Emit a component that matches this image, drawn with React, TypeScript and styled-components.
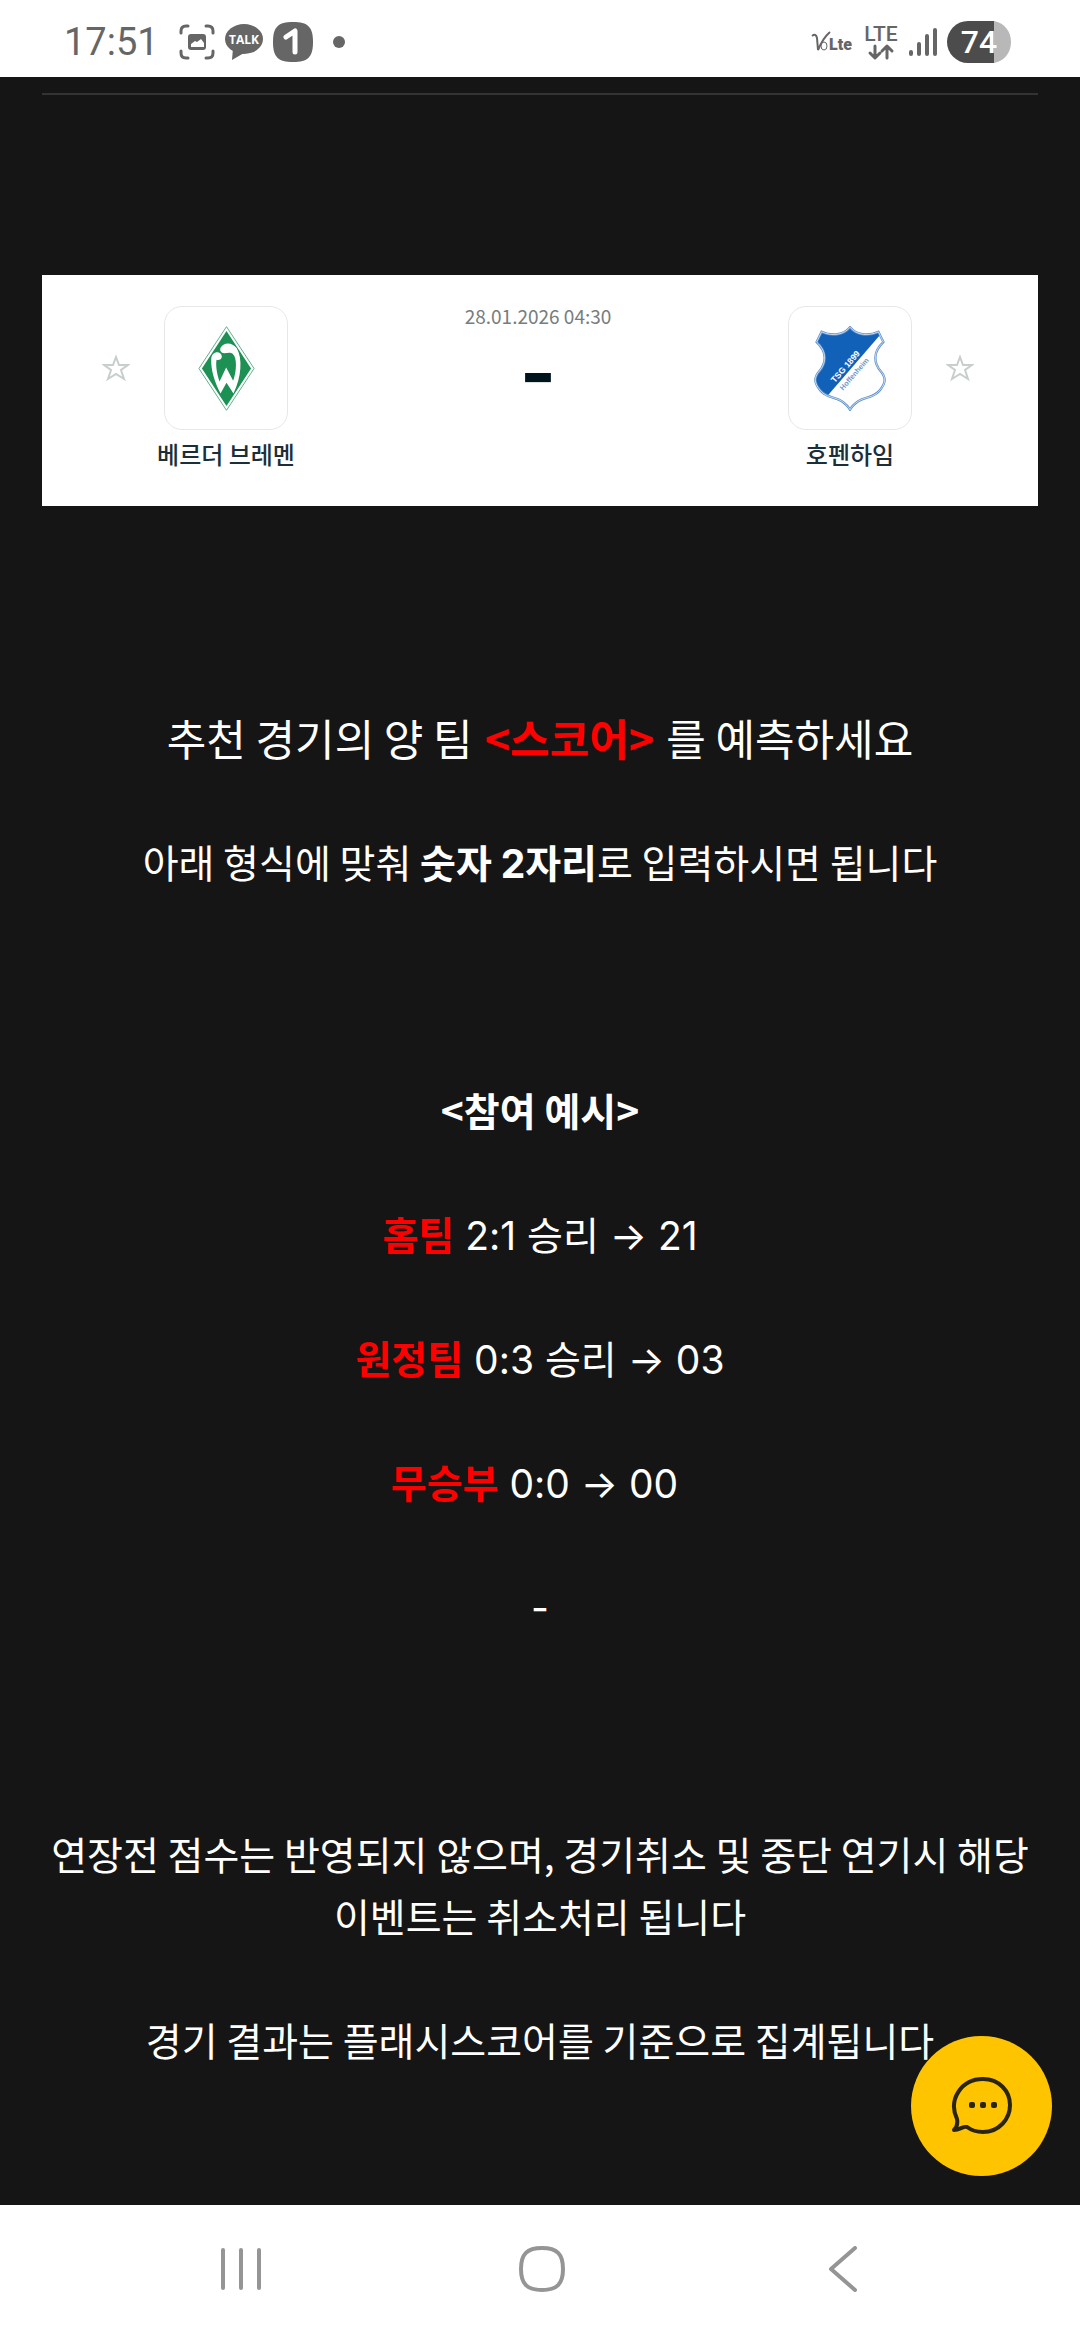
import React from 'react'
import styled, { createGlobalStyle } from 'styled-components'

const App = () => {
  return (
    <Screen>
      <GlobalStyle />
      <StatusBar>
        <StatusGroup>
          <Clock>17:51</Clock>
          <CaptureIcon />
          <TalkIcon />
          <OneIcon />
          <Dot />
        </StatusGroup>
        <StatusGroup>
          <VolteIcon />
          <LteIcon />
          <SignalIcon />
          <BatteryIcon />
        </StatusGroup>
      </StatusBar>

      <Content>
        <Divider />
        <MatchCard>
          <StarButton aria-label="베르더 브레멘 즐겨찾기">
            <StarIcon />
          </StarButton>
          <Team>
            <Badge>
              <BremenCrest />
            </Badge>
            <TeamName>베르더 브레멘</TeamName>
          </Team>
          <MatchInfo>
            <time dateTime="2026-01-28T04:30">28.01.2026 04:30</time>
            <Score>-</Score>
          </MatchInfo>
          <Team>
            <Badge>
              <HoffenheimCrest />
            </Badge>
            <TeamName>호펜하임</TeamName>
          </Team>
          <StarButton aria-label="호펜하임 즐겨찾기">
            <StarIcon />
          </StarButton>
        </MatchCard>

        <Article>
          <Title>
            추천 경기의 양 팀<Latin> </Latin><Red>&lt;스코어&gt;</Red><Latin> </Latin>를 예측하세요
          </Title>
          <Text>
            아래 형식에 맞춰 <b>숫자 <Latin>2</Latin>자리</b>로 입력하시면 됩니다
          </Text>
          <Text $spaced>
            <b>&lt;참여 예시&gt;</b>
          </Text>
          <Text>
            <Red>홈팀</Red><Latin> 2:1 </Latin>승리<Latin> → 21</Latin>
          </Text>
          <Text>
            <Red>원정팀</Red><Latin> 0:3 </Latin>승리<Latin> → 03</Latin>
          </Text>
          <Text>
            <Red>무승부</Red><Latin> 0:0 → 00&nbsp;</Latin>
          </Text>
          <Text>
            <Latin>-</Latin>
          </Text>
          <Text $spaced>
            연장전 점수는 반영되지 않으며, 경기취소 및 중단 연기시 해당 이벤트는 취소처리 됩니다
          </Text>
          <Text>경기 결과는 플래시스코어를 기준으로 집계됩니다</Text>
        </Article>
      </Content>

      <ChatButton aria-label="채팅 상담">
        <ChatIcon />
      </ChatButton>

      <NavBar>
        <NavButton aria-label="최근 앱">
          <svg width="40" height="46" viewBox="0 0 40 46" fill="none" stroke="#959595" strokeWidth="4" strokeLinecap="round">
            <path d="M2 4V42M20 4V42M38 4V42" />
          </svg>
        </NavButton>
        <NavButton aria-label="홈">
          <svg width="46" height="46" viewBox="0 0 46 46" fill="none" stroke="#959595" strokeWidth="4">
            <path d="M23 2C38 2 44 8 44 23S38 44 23 44S2 38 2 23S8 2 23 2Z" />
          </svg>
        </NavButton>
        <NavButton aria-label="뒤로">
          <svg width="28" height="46" viewBox="0 0 28 46" fill="none" stroke="#959595" strokeWidth="4" strokeLinecap="round" strokeLinejoin="round">
            <path d="M26 2L2 23L26 44" />
          </svg>
        </NavButton>
      </NavBar>
    </Screen>
  )
}

const CaptureIcon = () => (
  <svg width="36" height="36" viewBox="0 0 36 36">
    <g fill="none" stroke="#666" strokeWidth="3" strokeLinecap="round">
      <path d="M2 9V7Q2 2 7 2H9M27 2H29Q34 2 34 7V9M34 27V29Q34 34 29 34H27M9 34H7Q2 34 2 29V27" />
    </g>
    <rect x="9" y="10" width="18" height="16" rx="3" fill="#666" />
    <path d="M12 23V20L16 17L18 18L22 15L25 19V23Z" fill="#fff" />
  </svg>
)

const TalkIcon = () => (
  <svg width="38" height="36" viewBox="0 0 38 36">
    <ellipse cx="19" cy="15" rx="19" ry="15" fill="#666" />
    <path d="M8 24L7 36L19 29Z" fill="#666" />
    <text x="19" y="20" textAnchor="middle" fontFamily="Open Sans, sans-serif" fontWeight="700" fontSize="12" fill="#fff">TALK</text>
  </svg>
)

const OneIcon = () => (
  <svg width="40" height="40" viewBox="0 0 40 40">
    <path d="M20 0C35 0 40 5 40 20S35 40 20 40S0 35 0 20S5 0 20 0Z" fill="#666" />
    <path d="M13 15L22 9V30" fill="none" stroke="#fff" strokeWidth="5" strokeLinecap="round" strokeLinejoin="round" />
  </svg>
)

const VolteIcon = () => (
  <svg width="42" height="24" viewBox="0 0 42 24">
    <path d="M1 6Q5 3 6 8L7 20Q12 8 19 2" fill="none" stroke="#666" strokeWidth="2" />
    <ellipse cx="13" cy="16" rx="3" ry="4" fill="none" stroke="#666" strokeWidth="1" />
    <text x="18" y="20" fontFamily="Roboto, sans-serif" fontWeight="900" fontSize="16" fill="#666">Lte</text>
  </svg>
)

const LteIcon = () => (
  <svg width="36" height="38" viewBox="0 0 36 38">
    <text x="18" y="18" textAnchor="middle" fontFamily="Roboto, sans-serif" fontWeight="500" fontSize="21" fill="#666">LTE</text>
    <g fill="none" stroke="#666" strokeWidth="3" strokeLinecap="round" strokeLinejoin="round">
      <path d="M12 23V34M7 30L12 35L17 30M24 35V23M19 28L24 23L29 28" />
    </g>
  </svg>
)

const SignalIcon = () => (
  <svg width="28" height="30" viewBox="0 0 28 30" stroke="#666" strokeWidth="4" strokeLinecap="round">
    <path d="M2 25V27M10 17V27M18 9V27M26 3V27" />
  </svg>
)

const BatteryIcon = () => (
  <svg width="64" height="42" viewBox="0 0 64 42">
    <path d="M21 0H47V42H21A21 21 0 0 1 21 0Z" fill="#4c4c4c" />
    <path d="M47 0C57 2 64 10 64 21S57 40 47 42Z" fill="#b8b8b8" />
    <text x="32" y="32" textAnchor="middle" fontFamily="Roboto, sans-serif" fontWeight="500" fontSize="32" fill="#fff">74</text>
  </svg>
)

const StarIcon = () => (
  <svg width="28" height="28" viewBox="0 0 28 28" fill="none" stroke="#c8cdcd" strokeWidth="2">
    <path d="M14 3L17 11H26L19 16L22 25L14 20L6 25L9 16L2 11H11Z" />
  </svg>
)

const BremenCrest = () => (
  <svg width="57" height="85" viewBox="473 195 170 256">
    <path d="M558 197L641 323L558 449L475 323Z" fill="#fff" stroke="#5db389" strokeWidth="3" />
    <path d="M558 210L632 323L558 436L484 323Z" fill="#1d9053" />
    <path
      d="M512 296C512 270 541 268 544 286C544 296 535 299 528 297C525 315 529 340 537 362L557 320L578 360C589 330 590 290 577 279C569 273 560 277 552 277C541 277 536 268 541 259C550 244 575 243 589 262C607 292 603 350 579 398L558 366L540 398C521 362 511 326 512 296Z"
      fill="#fff"
    />
  </svg>
)

const SHIELD = 'M269 198C250 222 214 226 183 212L168 243C202 274 196 308 176 331C158 352 162 368 178 388C196 412 222 408 244 422C256 430 264 438 269 448C274 438 282 430 294 422C316 408 342 412 360 388C376 368 380 352 362 331C342 308 336 274 370 243L355 212C324 226 288 222 269 198Z'

const HoffenheimCrest = () => (
  <svg width="72" height="85" viewBox="160 195 218 256">
    <clipPath id="shield">
      <path d={SHIELD} />
    </clipPath>
    <path d="M150 180H396L203 403L150 420Z" fill="#1261b8" clipPath="url(#shield)" />
    <path d={SHIELD} fill="none" stroke="#5d90cc" strokeWidth="7" />
    <path d={SHIELD} fill="none" stroke="#fff" strokeWidth="2" />
    <g fontFamily="Liberation Sans, sans-serif" fontWeight="700">
      <text transform="translate(223 368) rotate(-49)" fontSize="26" fill="#fff">TSG 1899</text>
      <text transform="translate(248 390) rotate(-49)" fontSize="22" fill="#6c98cd">Hoffenheim</text>
    </g>
  </svg>
)

const ChatIcon = () => (
  <svg width="62" height="60" viewBox="0 0 62 60">
    <path
      d="M32 3C48 3 59 15 59 29S48 56 32 56C26 56 20 54 16 51C12 50 9 54 3 54C6 51 7 48 6 43C-3 24 10 3 32 3Z"
      fill="none"
      stroke="#2a2412"
      strokeWidth="4"
      strokeLinejoin="round"
    />
    <g fill="#2a2412">
      <rect x="18" y="26" width="6" height="6" rx="2" />
      <rect x="29" y="26" width="6" height="6" rx="2" />
      <rect x="40" y="26" width="6" height="6" rx="2" />
    </g>
  </svg>
)

const GlobalStyle = createGlobalStyle`
    * {
        box-sizing: border-box;
    }
    body {
        margin: 0;
        background: #151515;
    }
    button {
        padding: 0;
        border: 0;
        background: none;
        cursor: pointer;
    }
    svg {
        display: block;
        flex-shrink: 0;
    }
`

const Screen = styled.div`
    display: flex;
    flex-direction: column;
    min-height: 100vh;
    color: white;
    font-family: 'Noto Sans CJK KR', sans-serif;
`

const StatusBar = styled.header`
    display: flex;
    align-items: center;
    justify-content: space-between;
    height: 77px;
    padding: 7px 69px 0 64px;
    background: white;
    color: #666;
`

const StatusGroup = styled.div`
    display: flex;
    align-items: center;
    gap: 10px;
`

const Clock = styled.span`
    margin-right: 10px;
    font-family: Roboto, sans-serif;
    font-size: 38px;
    line-height: 40px;
`

const Dot = styled.span`
    width: 12px;
    height: 12px;
    margin-left: 10px;
    border-radius: 50%;
    background: #666;
`

const Content = styled.main`
    flex: 1;
    padding: 16px 42px 0;
`

const Divider = styled.hr`
    height: 2px;
    margin: 0 0 180px;
    border: 0;
    background: #333;
`

const MatchCard = styled.section`
    display: flex;
    align-items: flex-start;
    padding: 31px 64px 34px 60px;
    background: white;
    color: #1b2f3a;
`

const StarButton = styled.button`
    display: flex;
    align-items: center;
    height: 124px;
`

const Team = styled.div`
    display: flex;
    flex-direction: column;
    align-items: center;
    gap: 6px;
    width: 134px;
    margin: 0 29px;
`

const Badge = styled.div`
    display: flex;
    align-items: center;
    justify-content: center;
    width: 124px;
    height: 124px;
    border: 1px solid #e6e8e8;
    border-radius: 18px;
`

const TeamName = styled.span`
    font-size: 24px;
    font-weight: 500;
    line-height: 36px;
    white-space: nowrap;
`

const MatchInfo = styled.div`
    display: flex;
    flex: 1;
    flex-direction: column;
    align-items: center;
    color: #777d7d;
    font-size: 19px;
    line-height: 20px;
`

const Score = styled.strong`
    color: #00141e;
    font-family: Inter, sans-serif;
    font-size: 78px;
    font-weight: 700;
    line-height: 94px;
`

const Article = styled.article`
    padding-top: 200px;
    text-align: center;
`

const Title = styled.h1`
    margin: 0 0 62px;
    font-size: 43px;
    font-weight: 400;
    line-height: 62px;
`

const Text = styled.p<{ $spaced?: boolean }>`
    margin: ${({ $spaced }) => ($spaced ? '186px' : '0')} 0 62px;
    font-size: 39px;
    line-height: 62px;
    word-break: keep-all;
`

const Red = styled.b`
    color: #f00;
`

// line-height stays small so the second font does not grow the line
const Latin = styled.span`
    font-family: Inter, 'Noto Sans CJK KR', sans-serif;
    line-height: 1;
`

const ChatButton = styled.button`
    display: flex;
    align-items: center;
    justify-content: center;
    position: fixed;
    right: 28px;
    bottom: 164px;
    width: 141px;
    height: 140px;
    border-radius: 50%;
    background: #ffc400;
`

const NavBar = styled.nav`
    display: grid;
    grid-template-columns: repeat(3, 1fr);
    height: 135px;
    padding: 0 86px 8px 90px;
    background: white;
`

const NavButton = styled.button`
    display: flex;
    align-items: center;
    justify-content: center;
`

export default App
